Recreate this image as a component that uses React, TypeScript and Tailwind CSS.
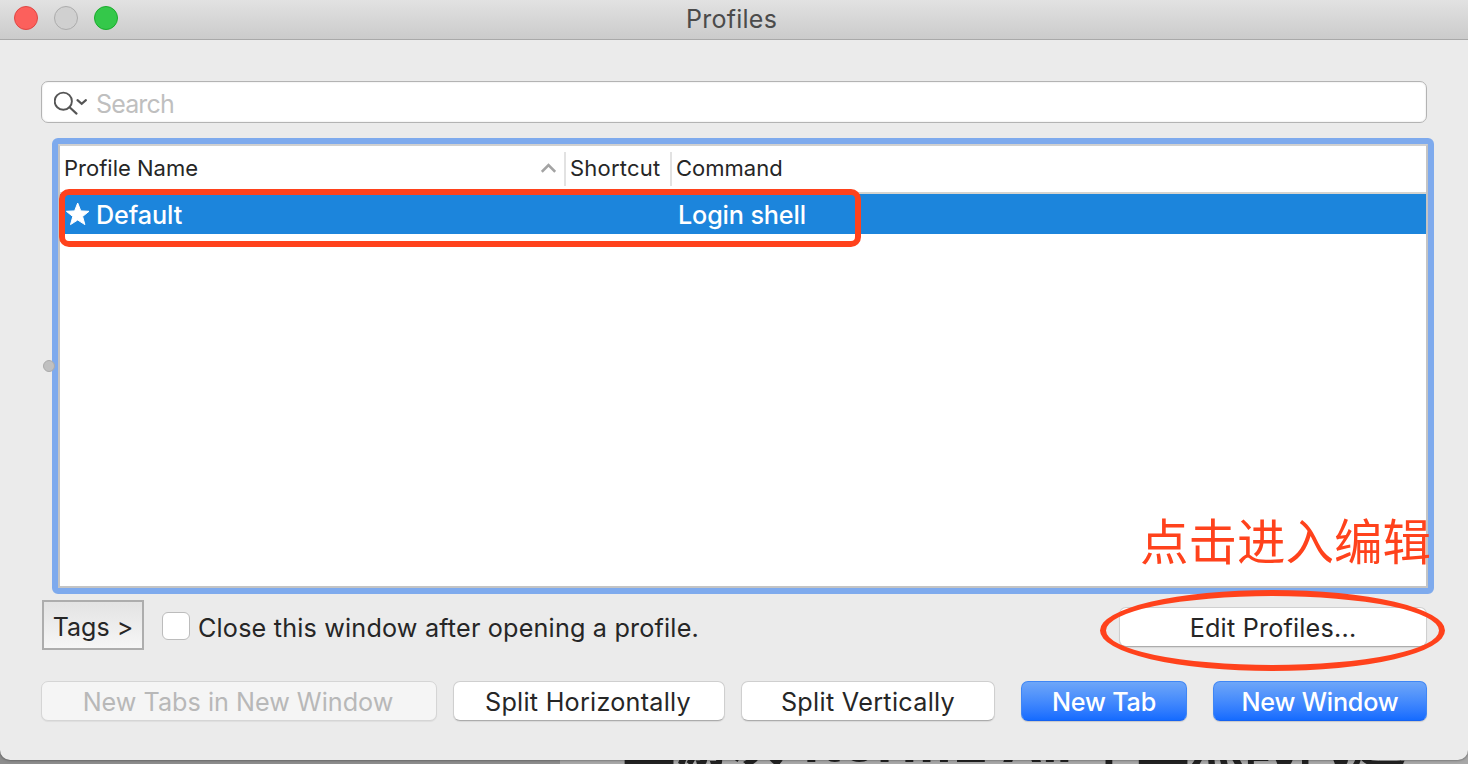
import React from "react";

const base =
  "flex h-10 items-center justify-center rounded-[7px] pt-[3px] whitespace-nowrap text-[25.2px]";
const plain = base + " border border-[#cfcfcf] border-b-[#acacac] bg-white text-[#262626] shadow-[0_1px_1px_rgba(0,0,0,0.08)]";
const primary = base + " border border-[#3f86f5] border-b-[#1562f0] bg-linear-to-b from-[#6ea6f8] to-[#146bff] font-medium tracking-[-0.2px] text-white shadow-[0_1px_1px_rgba(0,0,0,0.15)]";

function TitleBar() {
  return (
    <header className="relative flex h-10 shrink-0 items-center border-b-[1.5px] border-[#a9a9a9] bg-linear-to-b from-[#e2e2e2] to-[#cbcbcb] pb-1 pl-[14px]">
      <div className="flex gap-4">
        <span className="size-6 rounded-full border border-[#df4744] bg-[#fc605c]" />
        <span className="size-6 rounded-full border border-[#acacac] bg-[#d0d0d0]" />
        <span className="size-6 rounded-full border border-[#1aac2c] bg-[#34c84a]" />
      </div>
      <h1 className="ml-[568px] pt-[2px] text-[25px] leading-9 tracking-[0.25px] text-[#4b4b4b]">Profiles</h1>
    </header>
  );
}

function SearchField() {
  return (
    <div className="mx-[41px] mt-[41px] flex h-[42px] shrink-0 items-center rounded-[7px] border border-[#b3b3b3] bg-white pl-3 shadow-[inset_0_0_1px_1px_rgba(0,0,0,0.04)]">
      <svg className="mt-[2px]" width="34" height="24" viewBox="0 0 34 24" fill="none" stroke="#555" strokeWidth="1.9" strokeLinecap="round">
        <circle cx="9.3" cy="10.2" r="8.6" />
        <path d="M15.6 16.3 22.5 22.6" strokeWidth="2.1" />
        <path d="M23.5 9.2 27.7 12.8 31.9 9.2" strokeWidth="2.2" />
      </svg>
      <span className="ml-2 pt-[5px] text-[25px] tracking-[-0.85px] text-[#bfbfbf]">Search</span>
    </div>
  );
}

function ProfileTable() {
  return (
    <div className="mt-[15px] ml-[52px] flex h-[456px] w-[1382px] shrink-0 flex-col rounded-[6px] border-[6px] border-[#7eaaed] bg-white">
      <div className="relative flex flex-1 flex-col border-2 border-[#c4c4c4] border-t-[#d0d0d0]">
        <div className="flex h-12 items-center border-b-2 border-[#d4d4d0] text-[22px] text-[#262626]">
          <div className="flex h-[34px] w-[506px] items-center justify-between border-r-2 border-[#e2e2e2] pr-2 pb-[2px] pl-1">
            <span>Profile Name</span>
            <svg width="15" height="10" viewBox="0 0 15 10" fill="none" stroke="#a3a3a3" strokeWidth="2.6">
              <path d="M.8 8.8 7.5 2 14.2 8.8" />
            </svg>
          </div>
          <div className="flex h-[34px] w-[106px] items-center border-r-2 border-[#e2e2e2] pb-[2px] pl-1 tracking-[0.2px]">Shortcut</div>
          <span className="pb-[2px] pl-1">Command</span>
        </div>
        <div className="flex h-10 items-center bg-[#1c85dc] text-[25.2px] font-medium text-white">
          <svg className="ml-[5px]" width="25" height="24" viewBox="0 0 25 24" fill="white" stroke="white" strokeWidth="1" strokeLinejoin="round">
            <path d="M12.7 1 15.8 8.9 24 9.3 17.6 14.5 19.9 22.6 12.7 18 5.5 22.6 7.8 14.5 1.4 9.3 9.6 8.9Z" />
          </svg>
          <span className="ml-[6px] w-[582px] pt-[3px] tracking-[-0.1px]">Default</span>
          <span className="pt-[3px] tracking-[-0.15px]">Login shell</span>
        </div>
        <div className="absolute top-[42.5px] left-[-1px] h-[58px] w-[802px] rounded-[10px] border-[6px] border-[#ff421c]" />
        <span className="absolute top-[360px] left-[1080px] font-['Noto_Sans_CJK_SC',sans-serif] text-[48.5px] leading-[66px] font-normal whitespace-nowrap text-[#ff421c]">
          点击进入编辑
        </span>
      </div>
    </div>
  );
}

function BackgroundHeading() {
  return (
    <div className="absolute top-[710px] left-[622px] flex items-baseline font-['Inter','Noto_Sans_CJK_SC',sans-serif] text-[54px] leading-[66px] font-bold whitespace-nowrap text-[#222]">
      <span className="w-[182px]">且游次</span>
      <span className="w-[198px] tracking-[2.4px]">iterm2</span>
      <span className="w-[80px]">Air</span>
      <span>个主然的问题</span>
    </div>
  );
}

export default function App() {
  return (
    <main className="relative h-[764px] w-[1468px] overflow-hidden bg-[#a8a8a8] font-['Inter',sans-serif]">
      <div className="absolute bottom-0 left-0 h-6 w-[560px] bg-[#8d8d8d]" />
      <BackgroundHeading />
      <section className="relative flex h-[760px] flex-col overflow-hidden rounded-b-[10px] bg-[#ebebeb] shadow-[0_0_3px_rgba(0,0,0,0.55)]">
        <TitleBar />
        <SearchField />
        <ProfileTable />
        <span className="absolute top-[360px] left-[43px] size-3 rounded-full border border-[#aaa] bg-[#c0c0c0]" />
        <div className="mt-[6px] flex h-[50px] shrink-0 items-start pr-[41px] pl-[42px]">
          <button className="h-[50px] w-[102px] border-2 border-[#adadad] bg-linear-to-b from-[#e3e3e3] to-[#f6f6f6] pt-[5px] text-[25px] whitespace-nowrap text-[#262626]">
            Tags &gt;
          </button>
          <label className="ml-[18px] flex h-[52px] items-center text-[25.2px] text-[#262626]">
            <span className="mr-2 size-7 rounded-[6px] border border-[#bcbcbc] bg-white" />
            <span className="pt-[5px] tracking-[0.18px]">Close this window after opening a profile.</span>
          </label>
          <div className="relative mt-[7px] ml-auto w-[308px]">
            <button className={plain + " w-[308px] tracking-[0.2px]"}>Edit Profiles...</button>
            <div className="absolute top-[-17px] left-[-19px] h-[81px] w-[345px] rounded-[50%] border-[6px] border-[#ff421c]" />
          </div>
        </div>
        <div className="mt-[31px] flex shrink-0 pl-[41px]">
          <button className={base + " w-[396px] border border-[#d5d5d5] bg-[#f5f5f5] pr-[2px] text-[#b8b8b8] shadow-[0_1px_1px_rgba(0,0,0,0.06)]"}>
            New Tabs in New Window
          </button>
          <button className={plain + " ml-4 w-[272px] pr-[2px] tracking-[0.25px]"}>Split Horizontally</button>
          <button className={plain + " ml-4 w-[254px] tracking-[0.3px]"}>Split Vertically</button>
          <button className={primary + " ml-[26px] w-[166px]"}>New Tab</button>
          <button className={primary + " ml-[26px] w-[214px]"}>New Window</button>
        </div>
      </section>
    </main>
  );
}
